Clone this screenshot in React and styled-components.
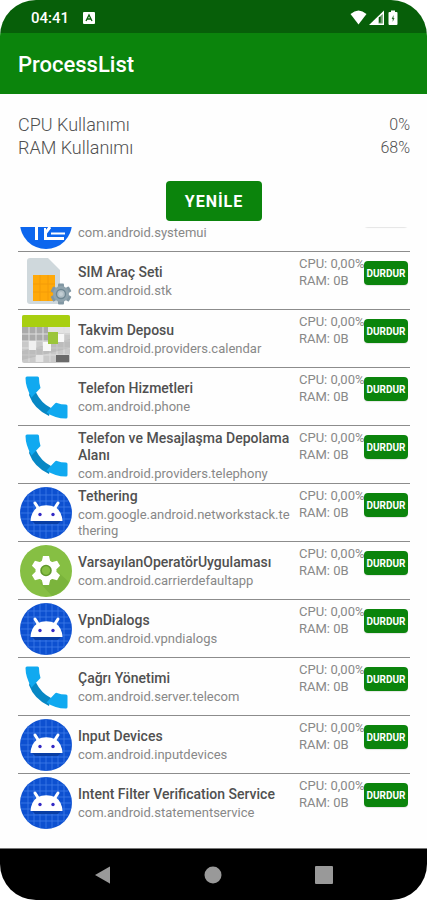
import styled, { createGlobalStyle } from 'styled-components';

const GlobalStyle = createGlobalStyle`
    * {
        box-sizing: border-box;
        margin: 0;
        padding: 0;
    }
    body {
        background: #fff;
        font-family: Roboto, "Noto Sans", sans-serif;
    }
    button {
        border: 0;
        font-family: inherit;
        cursor: pointer;
    }
    svg {
        display: block;
    }
`
const Screen = styled.div`
    display: flex;
    flex-direction: column;
    height: 100vh;
    border-radius: 36px;
    overflow: hidden;
    background: #fefefe;
`
const StatusBar = styled.div`
    display: flex;
    align-items: center;
    justify-content: space-between;
    height: 33px;
    padding: 2px 29px 0 31px;
    background: #075f09;
    color: #fff;
`
const StatusGroup = styled.div`
    display: flex;
    align-items: center;
    gap: ${({ $gap }) => $gap}px;
`
const Clock = styled.time`
    font-size: 15px;
    font-weight: 500;
    line-height: 20px;
`
const AppBar = styled.header`
    display: flex;
    align-items: center;
    height: 61px;
    padding: 3px 18px 0;
    background: #0b840c;
`
const AppTitle = styled.h1`
    font-size: 22px;
    font-weight: 500;
    line-height: 28px;
    color: #fff;
`
const Content = styled.main`
    display: flex;
    flex-direction: column;
    flex: 1;
    min-height: 0;
    padding: 19px 17px 17px 18px;
`
const Usage = styled.dl`
    display: flex;
    flex-direction: column;
`
const UsageRow = styled.div`
    display: flex;
    justify-content: space-between;
    font-size: 18px;
    font-weight: 300;
    line-height: 23px;
    color: #505050;
`
const UsageValue = styled.dd`
    font-size: 16px;
`
const RefreshButton = styled.button`
    align-self: center;
    height: 40px;
    margin: 22px 0 6px;
    padding: 0 19px;
    border-radius: 4px;
    background: #0b840c;
    color: #fff;
    font-size: 16px;
    font-weight: 700;
    letter-spacing: 1px;
`
/* the list is scrolled to its end, rows above are cut off */
const List = styled.ul`
    display: flex;
    flex: 1;
    flex-direction: column;
    justify-content: flex-end;
    min-height: 0;
    overflow: hidden;
    list-style: none;
`
const Row = styled.li`
    display: flex;
    flex: none;
    height: 58px;
    border-top: 1px solid #8c8c8c;
`
const IconBox = styled.div`
    display: flex;
    align-items: center;
    justify-content: center;
    flex: none;
    width: 56px;
`
const Info = styled.div`
    display: flex;
    flex: 1;
    flex-direction: column;
    justify-content: center;
    gap: 2px;
    min-width: 0;
    padding: 2px 6px 0 4px;
`
const Name = styled.h2`
    font-size: 14px;
    font-weight: 500;
    line-height: 17px;
    color: #505050;
`
const PackageName = styled.p`
    font-size: 13px;
    line-height: 16px;
    color: #888;
    overflow-wrap: anywhere;
`
const Metrics = styled.div`
    flex: none;
    width: 65px;
    padding-top: 3px;
    font-size: 13px;
    line-height: 17px;
    color: #888;
    white-space: nowrap;
`
const StopButton = styled.button`
    flex: none;
    width: 44px;
    height: 24px;
    margin: 9px 2px 0 0;
    border-radius: 4px;
    background: #0b840c;
    color: #fff;
    font-size: 10px;
    font-weight: 700;
    box-shadow: 0 1px 1px rgba(0, 0, 0, 0.1);
`
const NavBar = styled.nav`
    display: flex;
    align-items: center;
    justify-content: space-around;
    height: 52px;
    padding: 0 48px;
    border-top: 1px solid #777;
    background: #000;
`
const NavButton = styled.button`
    width: 24px;
    height: 24px;
    background: none;
`

const KeyboardIcon = () => (
    <svg width="12" height="12" viewBox="0 0 12 12">
        <rect width="12" height="12" rx="1" fill="#fff" />
        <path d="M3 9 L6 3 L9 9 M4.2 7 H7.8" stroke="#075f09" strokeWidth="1.3" fill="none" />
    </svg>
)

const WifiIcon = () => (
    <svg width="17" height="15" viewBox="0 0 17 15">
        <path d="M0.5 4 Q8.5 -3 16.5 4 L8.5 14.5 Z" fill="#fff" />
    </svg>
)

const SignalIcon = () => (
    <svg width="15" height="15" viewBox="0 0 15 15">
        <path d="M0 15 L15 0.5 V15 Z" fill="#fff" />
        <path d="M9.5 7.5 L13.8 4 V13.5 H9.5 Z" fill="#6c9f6d" />
        <path d="M10.8 7 V12.5" stroke="#075f09" strokeWidth="1.6" />
    </svg>
)

const BatteryIcon = () => (
    <svg width="10" height="15" viewBox="0 0 10 15">
        <path d="M3 0.5 H7 V2 H8.5 Q9.5 2 9.5 3 V14 Q9.5 15 8.5 15 H1.5 Q0.5 15 0.5 14 V3 Q0.5 2 1.5 2 H3 Z" fill="#fff" />
        <path d="M5.5 5 L3.7 9 H4.7 V12 L6.5 8 H5.5 Z" fill="#2b6e2c" />
    </svg>
)

const SystemIcon = () => (
    <svg width="52" height="52" viewBox="0 0 52 52">
        <circle cx="26" cy="26" r="26" fill="#0c66ee" />
        <path d="M16.5 18 V43 M30 30 L25.5 36 V41.5 H44" fill="none" stroke="#fff" strokeWidth="3" />
        <path d="M25 31 V40 M31 36.500 H45" fill="none" stroke="#fff" strokeWidth="2" />
    </svg>
)

const SimIcon = () => (
    <svg width="52" height="52" viewBox="0 0 52 52">
        <path d="M10 3 H28 L40 15 V47 Q40 49 38 49 H10 Q7 49 7 46 V6 Q7 3 10 3 Z" fill="#cfd8dc" />
        <rect x="13" y="20" width="22" height="26" fill="#ffa909" />
        <path d="M13 29 H35 M13 37 H35 M20 20 V46 M28 20 V46" stroke="#f49b08" strokeWidth="1" />
        <g transform="translate(41 39)">
            <g fill="#8197a3">
                {[0, 60, 120].map((angle) => (
                    <rect key={angle} x="-3" y="-10.500" width="6" height="21" rx="1" transform={`rotate(${angle})`} />
                ))}
            </g>
            <circle r="8" fill="#90a4ae" />
            <circle r="4.5" fill="#b0bec5" stroke="#6f8793" strokeWidth="1.4" />
            <circle r="2" fill="#c3cfd5" />
        </g>
    </svg>
)

const CalendarIcon = () => (
    <svg width="50" height="50" viewBox="0 0 50 50">
        <rect x="1" y="1" width="48" height="48" rx="2" fill="#c9c9c9" />
        <path d="M3 1 H47 Q49 1 49 3 V13 H1 V3 Q1 1 3 1 Z" fill="#a8cf10" />
        <rect x="1" y="13" width="26" height="14" fill="#aaa" />
        <rect x="27" y="13" width="22" height="6" fill="#e2e2e2" />
        <path d="M8 13 V48 M15 13 V48 M22 13 V48 M29 28 V48 M36 28 V48 M43 13 V48 M1 20 H49 M1 27 H49 M1 34 H49 M1 41 H49" stroke="#dedede" strokeWidth="1" />
        <path d="M1 37 L49 25 V34 L1 46 Z" fill="#a4a4a4" opacity="0.35" />
        <rect x="8" y="27" width="7" height="9" fill="#f0f0f0" />
        <rect x="22" y="28" width="8" height="9" fill="#f8f8f8" />
        <rect x="36" y="20" width="7" height="8" fill="#f8f8f8" />
        <rect x="27" y="18" width="10" height="12" fill="#9bc53a" />
        <rect x="15" y="41" width="7" height="7" fill="#e6e6e6" />
        <rect x="35" y="41" width="13" height="7" fill="#6a6a6a" />
    </svg>
)

const PhoneIcon = () => (
    <svg width="52" height="52" viewBox="0 0 52 52">
        <path d="M11 18 L16 21.500 Q21 32 31 37 L29 45 Q14 38 9 24 Z" fill="#0787c4" />
        <path d="M7 5.500 H17.500 Q19 5.500 19 7 Q19 12 20.500 17 L11.500 26.500 Q5.500 16 5.500 7 Q5.500 5.500 7 5.500 Z" fill="#10a9f0" />
        <path d="M26.500 41.500 L35 32.500 Q36 31.500 37 32 Q41 33.500 46 33.500 Q47.500 33.500 47.500 35 V46 Q47.500 47.500 46 47.500 Q35 47.500 26.500 41.500 Z" fill="#10a9f0" />
    </svg>
)

const AndroidIcon = () => (
    <svg width="52" height="52" viewBox="0 0 52 52">
        <circle cx="26" cy="26" r="26" fill="#0d50d0" />
        <path
            d="M8 8 V44 M14 4 V48 M20 1 V51 M26 0 V52 M32 1 V51 M38 4 V48 M44 8 V44 M8 8 H44 M4 14 H48 M1 20 H51 M0 26 H52 M1 32 H51 M4 38 H48 M8 44 H44"
            stroke="#3f7ce8"
            strokeWidth="0.8"
        />
        <path d="M11 33 H42 L38 37 H15 Z" fill="#083da4" />
        <path d="M15 16 L18.500 21.500 M38 16 L34.500 21.500" stroke="#fff" strokeWidth="3" strokeLinecap="round" />
        <path d="M10.500 34 Q11 25 17 20.500 Q26 16 36 20.500 Q42 25 42.500 34 Z" fill="#fff" />
        <circle cx="20" cy="27.500" r="1.700" fill="#3328c4" />
        <circle cx="33" cy="27.500" r="1.700" fill="#3328c4" />
    </svg>
)

const CarrierIcon = () => (
    <svg width="52" height="52" viewBox="0 0 52 52">
        <circle cx="26" cy="26" r="26" fill="#86bf43" />
        <path d="M20 38 L32 51 Q43 48 49 37 L38 27 Z" fill="#7bb43c" />
        <g transform="translate(26 25.500)">
            <g fill="#fff">
                {[0, 60, 120].map((angle) => (
                    <path key={angle} d="M-3 -14.500 H3 L4.500 -8 V8 L3 14.500 H-3 L-4.500 8 V-8 Z" transform={`rotate(${angle})`} />
                ))}
                <circle r="10.500" />
            </g>
            <circle r="5" fill="#86bf43" stroke="#60982c" strokeWidth="1.600" />
        </g>
    </svg>
)

const icons = {
    system: SystemIcon,
    sim: SimIcon,
    calendar: CalendarIcon,
    phone: PhoneIcon,
    android: AndroidIcon,
    carrier: CarrierIcon
}

const processes = [
    { icon: 'system', name: 'Sistem Arayüzü', pkg: 'com.android.systemui' },
    { icon: 'sim', name: 'SIM Araç Seti', pkg: 'com.android.stk' },
    { icon: 'calendar', name: 'Takvim Deposu', pkg: 'com.android.providers.calendar' },
    { icon: 'phone', name: 'Telefon Hizmetleri', pkg: 'com.android.phone' },
    { icon: 'phone', name: 'Telefon ve Mesajlaşma Depolama Alanı', pkg: 'com.android.providers.telephony' },
    { icon: 'android', name: 'Tethering', pkg: 'com.google.android.networkstack.tethering' },
    { icon: 'carrier', name: 'VarsayılanOperatörUygulaması', pkg: 'com.android.carrierdefaultapp' },
    { icon: 'android', name: 'VpnDialogs', pkg: 'com.android.vpndialogs' },
    { icon: 'phone', name: 'Çağrı Yönetimi', pkg: 'com.android.server.telecom' },
    { icon: 'android', name: 'Input Devices', pkg: 'com.android.inputdevices' },
    { icon: 'android', name: 'Intent Filter Verification Service', pkg: 'com.android.statementservice' }
]

const ProcessRow = ({ icon, name, pkg }) => {
    const Icon = icons[icon]

    return (
        <Row>
            <IconBox><Icon /></IconBox>
            <Info>
                <Name>{name}</Name>
                <PackageName>{pkg}</PackageName>
            </Info>
            <Metrics>
                <p>CPU: 0,00%</p>
                <p>RAM: 0B</p>
            </Metrics>
            <StopButton type="button">DURDUR</StopButton>
        </Row>
    )
}

const App = () => {
    return (
        <>
            <GlobalStyle />
            <Screen>
                <StatusBar>
                    <StatusGroup $gap={14}>
                        <Clock>04:41</Clock>
                        <KeyboardIcon />
                    </StatusGroup>
                    <StatusGroup $gap={2}>
                        <WifiIcon />
                        <SignalIcon />
                        <span />
                        <BatteryIcon />
                    </StatusGroup>
                </StatusBar>
                <AppBar>
                    <AppTitle>ProcessList</AppTitle>
                </AppBar>
                <Content>
                    <Usage>
                        <UsageRow>
                            <dt>CPU Kullanımı</dt>
                            <UsageValue>0%</UsageValue>
                        </UsageRow>
                        <UsageRow>
                            <dt>RAM Kullanımı</dt>
                            <UsageValue>68%</UsageValue>
                        </UsageRow>
                    </Usage>
                    <RefreshButton type="button">YENİLE</RefreshButton>
                    <List>
                        {processes.map((item) => (
                            <ProcessRow key={item.pkg} {...item} />
                        ))}
                    </List>
                </Content>
                <NavBar>
                    <NavButton type="button" aria-label="Geri">
                        <svg width="24" height="24" viewBox="0 0 24 24">
                            <path d="M4 12 L18 4 Q19 3 19 4 V20 Q19 21 18 20 Z" fill="#999" />
                        </svg>
                    </NavButton>
                    <NavButton type="button" aria-label="Ana ekran">
                        <svg width="24" height="24" viewBox="0 0 24 24">
                            <circle cx="12" cy="12" r="8.500" fill="#999" />
                        </svg>
                    </NavButton>
                    <NavButton type="button" aria-label="Son uygulamalar">
                        <svg width="24" height="24" viewBox="0 0 24 24">
                            <rect x="3" y="3" width="18" height="18" rx="1" fill="#999" />
                        </svg>
                    </NavButton>
                </NavBar>
            </Screen>
        </>
    )
}

export default App;
